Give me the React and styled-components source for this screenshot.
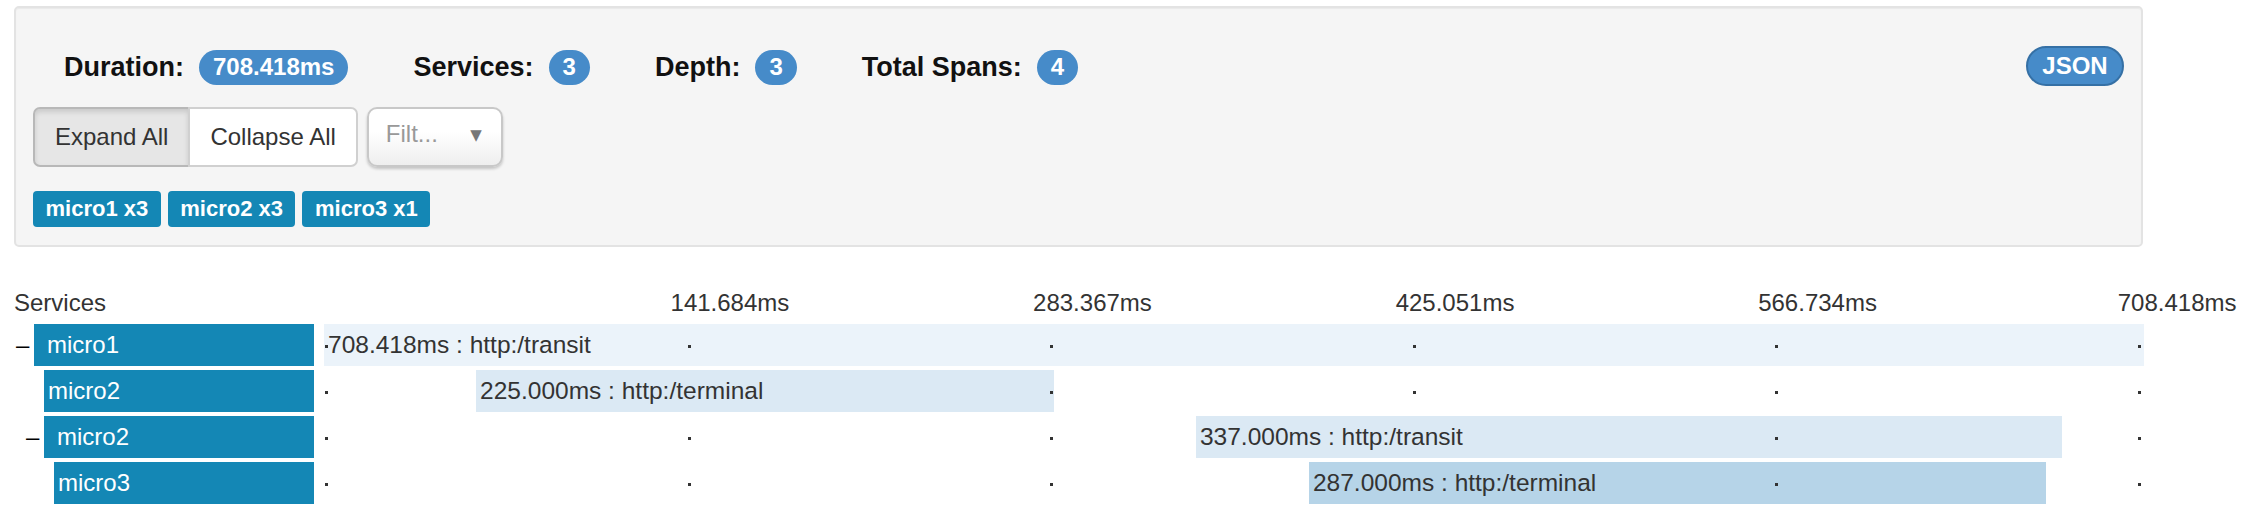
import React from "react";
import styled, { createGlobalStyle } from "styled-components";

const GlobalStyle = createGlobalStyle`
  body {
    margin: 0;
    background: #fff;
    font-family: "Liberation Sans", Arial, sans-serif;
    color: #333;
  }
`;

const DURATION = 708.418;

const stats = [
  { label: "Duration:", value: "708.418ms" },
  { label: "Services:", value: "3" },
  { label: "Depth:", value: "3" },
  { label: "Total Spans:", value: "4" },
];

const tags = ["micro1 x3", "micro2 x3", "micro3 x1"];

const spans = [
  { name: "micro1", depth: 0, parent: true, start: 0, dur: 708.418, label: "708.418ms : http:/transit", tone: "#ebf3fa" },
  { name: "micro2", depth: 1, parent: false, start: 59.2, dur: 225, label: "225.000ms : http:/terminal", tone: "#dbe9f4" },
  { name: "micro2", depth: 1, parent: true, start: 339.4, dur: 337, label: "337.000ms : http:/transit", tone: "#dbe9f4" },
  { name: "micro3", depth: 2, parent: false, start: 383.4, dur: 287, label: "287.000ms : http:/terminal", tone: "#b6d4e8" },
];

const ticks = [1, 2, 3, 4, 5];

export default function App() {
  return (
    <>
      <GlobalStyle />
      <Page>
        <Panel>
          <StatsRow>
            {stats.map((s) => (
              <Stat key={s.label}>
                <StatLabel>{s.label}</StatLabel>
                <Badge>{s.value}</Badge>
              </Stat>
            ))}
            <JsonButton>JSON</JsonButton>
          </StatsRow>

          <Controls>
            <ButtonGroup>
              <GroupButton active>Expand All</GroupButton>
              <GroupButton>Collapse All</GroupButton>
            </ButtonGroup>
            <FilterSelect>
              <FilterText>Filt...</FilterText>
              <Caret>▼</Caret>
            </FilterSelect>
          </Controls>

          <Tags>
            {tags.map((t) => (
              <Tag key={t}>{t}</Tag>
            ))}
          </Tags>
        </Panel>

        <Timeline>
          <HeaderRow>
            <HeaderName>Services</HeaderName>
            <Track>
              {ticks.map((k) => (
                <TickLabel key={k} style={{ left: `calc(${k * 19.92}% - ${k === 5 ? 19 : 16}px)` }}>
                  {((DURATION * k) / 5).toFixed(3)}ms
                </TickLabel>
              ))}
            </Track>
          </HeaderRow>

          {spans.map((s, i) => (
            <Row key={i}>
              <NameCell depth={s.depth}>
                <Toggle>{s.parent ? "–" : ""}</Toggle>
                <NameBox parent={s.parent}>{s.name}</NameBox>
              </NameCell>
              <Track>
                <Bar
                  tone={s.tone}
                  style={{
                    left: `${(s.start / DURATION) * 100}%`,
                    width: `${(s.dur / DURATION) * 100}%`,
                  }}
                >
                  <BarLabel tone={s.tone}>{s.label}</BarLabel>
                </Bar>
                {[0, 1, 2, 3, 4, 5].map((k) => (
                  <Dot key={k} style={{ left: `calc(${k * 19.92}% + 1px)` }} />
                ))}
              </Track>
            </Row>
          ))}
        </Timeline>
      </Page>
    </>
  );
}

const Page = styled.div`
  padding: 6px 0 0 0;
`;

const Panel = styled.div`
  box-sizing: border-box;
  margin-left: 14px;
  width: 2129px;
  background: #f5f5f5;
  border: 2px solid #e3e3e3;
  border-radius: 5px;
  box-shadow: inset 0 1px 1px rgba(0, 0, 0, 0.05);
  padding: 30px 17px 18px 17px;
`;

const StatsRow = styled.div`
  display: flex;
  align-items: center;
  height: 58px;
  padding-left: 31px;
  gap: 65px;
`;

const Stat = styled.div`
  display: flex;
  align-items: center;
  gap: 15px;
`;

const StatLabel = styled.span`
  font-size: 27px;
  font-weight: bold;
  color: #111;
`;

const Badge = styled.span`
  box-sizing: border-box;
  height: 35px;
  min-width: 41px;
  padding: 0 14px;
  border-radius: 18px;
  background: #468bc9;
  color: #fff;
  font-size: 24px;
  font-weight: bold;
  display: flex;
  align-items: center;
  justify-content: center;
`;

const JsonButton = styled.button`
  margin-left: auto;
  box-sizing: border-box;
  width: 98px;
  height: 40px;
  border: 2px solid #3570a5;
  border-radius: 20px;
  background: #468bc9;
  color: #fff;
  font-family: "Liberation Sans", Arial, sans-serif;
  font-size: 24px;
  font-weight: bold;
  padding: 0;
  margin-top: -2px;
`;

const Controls = styled.div`
  display: flex;
  align-items: stretch;
  margin-top: 11px;
  height: 60px;
  gap: 9px;
`;

const ButtonGroup = styled.div`
  display: flex;
`;

const GroupButton = styled.button`
  font-family: "Liberation Sans", Arial, sans-serif;
  font-size: 24px;
  color: #333;
  padding: 0 20px;
  border: 2px solid ${(p) => (p.active ? "#b8b8b8" : "#d0d0d0")};
  background: ${(p) => (p.active ? "#e6e6e6" : "#fff")};
  box-shadow: ${(p) => (p.active ? "inset 0 3px 5px rgba(0,0,0,0.125)" : "none")};
  border-radius: ${(p) => (p.active ? "7px 0 0 7px" : "0 7px 7px 0")};
  margin-left: ${(p) => (p.active ? "0" : "-2px")};
`;

const FilterSelect = styled.div`
  box-sizing: border-box;
  width: 136px;
  border: 2px solid #c8c8c8;
  border-radius: 10px;
  background: linear-gradient(#ffffff 40%, #eeeeee);
  box-shadow: 0 2px 3px rgba(0, 0, 0, 0.2);
  display: flex;
  align-items: flex-start;
  justify-content: space-between;
  padding: 11px 19px 0 17px;
`;

const FilterText = styled.span`
  font-size: 24px;
  color: #999;
`;

const Caret = styled.span`
  font-family: "DejaVu Sans", sans-serif;
  font-size: 15px;
  color: #777;
  margin-top: 6px;
`;

const Tags = styled.div`
  display: flex;
  gap: 7px;
  margin-top: 24px;
`;

const Tag = styled.span`
  height: 36px;
  padding: 0 12.5px;
  border-radius: 4px;
  background: #1487b5;
  color: #fff;
  font-size: 22px;
  font-weight: bold;
  display: flex;
  align-items: center;
`;

const Timeline = styled.div`
  margin-top: 41px;
`;

const HeaderRow = styled.div`
  display: flex;
  height: 30px;
  line-height: 30px;
  margin-bottom: 6px;
  font-size: 24px;
  color: #333;
`;

const HeaderName = styled.div`
  width: 314px;
  padding-left: 14px;
  box-sizing: border-box;
  margin-right: 10px;
`;

const Track = styled.div`
  position: relative;
  width: 1820px;
  height: 100%;
`;

const TickLabel = styled.span`
  position: absolute;
  top: 0;
  white-space: nowrap;
`;

const Row = styled.div`
  display: flex;
  height: 42px;
  margin-bottom: 4px;
`;

const NameCell = styled.div`
  box-sizing: border-box;
  width: 314px;
  margin-right: 10px;
  padding-left: ${(p) => p.depth * 10}px;
  display: flex;
`;

const Toggle = styled.span`
  flex: none;
  width: 34px;
  box-sizing: border-box;
  padding-left: 16px;
  font-size: 24px;
  line-height: 42px;
  color: #000;
`;

const NameBox = styled.div`
  flex: 1;
  background: #1487b5;
  color: #fff;
  font-size: 24px;
  display: flex;
  align-items: center;
  padding-left: ${(p) => (p.parent ? "13px" : "4px")};
`;

const Bar = styled.div`
  position: absolute;
  top: 0;
  bottom: 0;
  background: ${(p) => p.tone};
  box-sizing: border-box;
  padding-left: 4px;
  display: flex;
  align-items: center;
  font-size: 24.5px;
  color: #333;
  white-space: nowrap;
`;

const BarLabel = styled.span`
  position: relative;
  z-index: 2;
  background: ${(p) => p.tone};
`;

const Dot = styled.span`
  position: absolute;
  z-index: 1;
  top: 21px;
  width: 3px;
  height: 3px;
  background: #333;
`;
